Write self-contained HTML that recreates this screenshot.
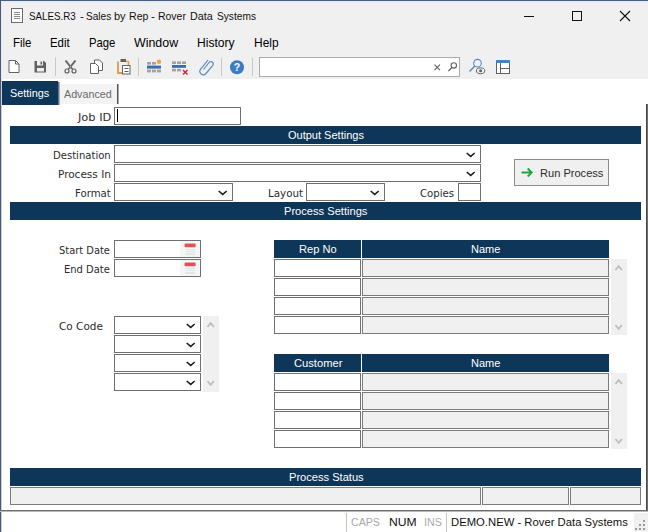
<!DOCTYPE html>
<html><head><meta charset="utf-8"><title>SALES.R3 - Sales by Rep - Rover Data Systems</title>
<style>
*{box-sizing:border-box;margin:0;padding:0}
html,body{width:648px;height:532px;overflow:hidden;background:#fff}
body{position:relative;font-family:"Liberation Sans","DejaVu Sans",sans-serif;font-size:12px;color:#1a1a1a}
.a{position:absolute}
.t{position:absolute;white-space:nowrap;line-height:normal;transform-origin:0 0}
.l{font-family:"DejaVu Sans Condensed","DejaVu Sans","Liberation Sans",sans-serif;font-stretch:condensed}
.in{position:absolute;background:#fff;border:1px solid #707070}
.ro{position:absolute;background:#f0f0f0;border:1px solid #7c7c7c}
</style></head><body>
<!-- window chrome -->
<div class="a" style="left:0;top:0;width:648px;height:79px;background:#f0f0f0"></div>
<div class="a" style="left:0;top:1px;width:648px;height:1px;background:#dfe8f4"></div>
<div class="a" style="left:0;top:2px;width:648px;height:1px;background:#e9eef5"></div>
<div class="a" style="left:1px;top:1px;width:1px;height:78px;background:#e2eaf5"></div>
<div class="a" style="left:0;top:0;width:648px;height:1px;background:#4c5f7e"></div>
<div class="a" style="left:0;top:0;width:1px;height:532px;background:#495a78"></div>
<div class="a" style="left:1px;top:79px;width:1px;height:453px;background:#cdd1d8"></div>
<!-- right edge -->
<div class="a" style="left:646px;top:104px;width:1px;height:406px;background:#4a4a4a"></div>
<div class="a" style="left:647px;top:104px;width:1px;height:406px;background:#6e6e6e"></div>
<!-- title icon -->
<svg class="a" style="left:10px;top:7px" width="15" height="17" viewBox="0 0 15 17"><rect x="1.500" y="1.500" width="11" height="14" fill="#fff" stroke="#6a6a6a"/><path d="M4 5.500h6M4 7.500h6M4 9.500h6M4 11.500h6" stroke="#8a8a8a" stroke-width="1"/></svg>
<!-- window buttons -->
<svg class="a" style="left:520px;top:6px" width="120" height="22" viewBox="0 0 120 22"><path d="M4 10.500h10" stroke="#111" stroke-width="1"/><rect x="52.500" y="5.500" width="9" height="9" fill="none" stroke="#111"/><path d="M100 5l10 10M110 5l-10 10" stroke="#111" stroke-width="1.100"/></svg>
<!-- toolbar -->
<svg class="a" style="left:0;top:56px" width="648" height="24" viewBox="0 0 648 24">
 <path d="M9 4.500h6.500l3.500 3.500v8.500h-10z" fill="#fff" stroke="#626262"/><path d="M15.500 4.500v3.500h3.500" fill="none" stroke="#626262"/>
 <path d="M34.500 5h9.500l2 2v9.500h-11.500z" fill="#626262"/><rect x="37" y="5" width="6" height="4.500" fill="#f0f0f0"/><rect x="40.500" y="5.500" width="1.500" height="3" fill="#626262"/><rect x="37" y="12" width="7" height="3.500" fill="#f0f0f0"/>
 <line x1="55.500" y1="1.500" x2="55.500" y2="20" stroke="#c8c8c8"/>
 <path d="M65 5l1.500 -0.500l6.500 8.500h-1.500zM76 5l-1.500 -0.500l-6.500 8.500h1.500z" fill="#626262" stroke="#626262" stroke-width="0.600"/><circle cx="67" cy="15" r="2" fill="none" stroke="#626262" stroke-width="1.200"/><circle cx="74" cy="15" r="2" fill="none" stroke="#626262" stroke-width="1.200"/>
 <path d="M94.500 4h5l3 3v7.500h-8z" fill="#fff" stroke="#626262"/><path d="M90.500 7.500h5l3 3v7h-8z" fill="#fff" stroke="#626262"/>
 <path d="M118 5.500v11.500h4" fill="none" stroke="#e39a4a" stroke-width="1.800"/><path d="M126 5.500h2.500v3.500" fill="none" stroke="#e39a4a" stroke-width="1.500"/><rect x="120.500" y="3" width="5.500" height="3" fill="#626262"/><rect x="122.500" y="9.500" width="7.500" height="8.500" fill="#fff" stroke="#626262"/><path d="M124.500 12.500h4M124.500 15.500h4" stroke="#626262"/>
 <line x1="138.500" y1="2" x2="138.500" y2="20" stroke="#c8c8c8"/>
 <!-- insert row -->
 <g fill="#a2a2a2"><rect x="147" y="6" width="4" height="2.600"/><rect x="152" y="6" width="4" height="2.600"/><rect x="147" y="13.600" width="4" height="2.800"/><rect x="152" y="13.600" width="4" height="2.800"/><rect x="157" y="13.600" width="4" height="2.800"/></g>
 <rect x="147" y="9.600" width="14" height="3" fill="#3b6ea8"/><circle cx="159" cy="5.800" r="2.200" fill="#f0a24a"/>
 <!-- delete row -->
 <g fill="#a2a2a2"><rect x="172" y="5.400" width="4" height="2.600"/><rect x="177" y="5.400" width="4" height="2.600"/><rect x="182" y="5.400" width="4" height="2.600"/><rect x="172" y="12.800" width="4" height="2.600"/><rect x="177" y="12.800" width="4" height="2.600"/></g>
 <rect x="172" y="9" width="14" height="2.800" fill="#3b6ea8"/><path d="M183 14l4.500 4.500M187.500 14l-4.500 4.500" stroke="#d8202a" stroke-width="1.500"/>
 <!-- clip -->
 <path d="M203.500 13.500l5.500-7a2.300 2.300 0 0 1 3.700 2.800l-6.700 8.200a3.400 3.400 0 0 1-5.300-4.300l7.300-9.200" fill="none" stroke="#5a8bc8" stroke-width="1.200"/>
 <line x1="221.500" y1="2" x2="221.500" y2="20" stroke="#c8c8c8"/>
 <circle cx="237" cy="11.300" r="7" fill="#3d7bc3"/><text x="237" y="15" font-size="10.500" font-weight="bold" fill="#fff" text-anchor="middle" font-family="Liberation Sans, sans-serif">?</text>
 <line x1="252.500" y1="2" x2="252.500" y2="20" stroke="#c8c8c8"/>
 <rect x="259.500" y="1.500" width="200" height="19" fill="#fff" stroke="#ababab"/>
 <path d="M434.500 8.700l5.500 5.500M440 8.700l-5.500 5.500" stroke="#626262" stroke-width="1.100"/>
 <circle cx="453.800" cy="9.400" r="2.700" fill="none" stroke="#626262" stroke-width="1.100"/><path d="M451.900 11.500l-3.600 3.600" stroke="#626262" stroke-width="1.300"/>
 <circle cx="477.500" cy="7.200" r="3.800" fill="none" stroke="#4f8ad0" stroke-width="1.100"/><path d="M474.800 10.100l-5.300 5.300" stroke="#4f8ad0" stroke-width="1.400"/><ellipse cx="480.600" cy="14.800" rx="4.200" ry="2.900" fill="#f0f0f0" stroke="#626262"/><circle cx="480.600" cy="14.800" r="1.500" fill="#626262"/>
 <rect x="496.500" y="5.500" width="13" height="12" fill="#fff" stroke="#626262"/><rect x="496" y="4" width="14" height="3" fill="#4a80c4"/><path d="M500.500 7v10M501 12.500h8" stroke="#626262"/>
</svg>

<!-- tabs -->
<div class="a" style="left:2px;top:81px;width:56px;height:24px;background:#0e3658"></div>
<div class="a" style="left:58px;top:82px;width:1px;height:23px;background:#62748a"></div>
<div class="a" style="left:59px;top:82px;width:1px;height:23px;background:#a9b4c0"></div>
<div class="a" style="left:60px;top:84px;width:57px;height:20px;background:#f3f3f3"></div>
<div class="a" style="left:117px;top:84px;width:1px;height:20px;background:#555"></div>
<div class="a" style="left:118px;top:84px;width:1px;height:20px;background:#a8a8a8"></div>
<div class="in" style="left:114px;top:107px;width:127px;height:18px;"></div>
<div class="a" style="left:117px;top:109px;width:1px;height:13px;background:#000"></div>
<div class="a" style="left:10px;top:126px;width:631px;height:18px;background:#0e3658"></div>
<div class="a" style="left:10px;top:202px;width:631px;height:18px;background:#0e3658"></div>
<div class="a" style="left:10px;top:468px;width:631px;height:18px;background:#0e3658"></div>
<div class="in" style="left:114px;top:145px;width:367px;height:18px;"></div>
<svg class="a" style="left:465px;top:151px" width="11" height="8" viewBox="0 0 11 8"><path d="M1.700 2L5.700 5.400L9.700 2" fill="none" stroke="#1a1a1a" stroke-width="1.5"/></svg>
<div class="in" style="left:114px;top:164px;width:367px;height:18px;"></div>
<svg class="a" style="left:465px;top:170px" width="11" height="8" viewBox="0 0 11 8"><path d="M1.700 2L5.700 5.400L9.700 2" fill="none" stroke="#1a1a1a" stroke-width="1.5"/></svg>
<div class="in" style="left:114px;top:183px;width:119px;height:18px;"></div>
<svg class="a" style="left:217px;top:189px" width="11" height="8" viewBox="0 0 11 8"><path d="M1.700 2L5.700 5.400L9.700 2" fill="none" stroke="#1a1a1a" stroke-width="1.5"/></svg>
<div class="in" style="left:306px;top:183px;width:79px;height:18px;"></div>
<svg class="a" style="left:369px;top:189px" width="11" height="8" viewBox="0 0 11 8"><path d="M1.700 2L5.700 5.400L9.700 2" fill="none" stroke="#1a1a1a" stroke-width="1.5"/></svg>
<div class="in" style="left:458px;top:183px;width:23px;height:18px;"></div>
<div class="a" style="left:514px;top:159px;width:95px;height:27px;background:#f0f0f0;border:1px solid #8c8c8c"></div>
<svg class="a" style="left:520px;top:166px" width="14" height="13" viewBox="0 0 14 13"><path d="M1.500 6.500h10M7.700 2.500l4 4l-4 4" fill="none" stroke="#1fa53c" stroke-width="1.900"/></svg>
<div class="in" style="left:114px;top:240px;width:87px;height:18px;"></div>
<svg class="a" style="left:180px;top:241px" width="20" height="16" viewBox="0 0 20 16"><rect x="0" y="0" width="20" height="16" fill="#f5f5f5"/><rect x="4.500" y="2.500" width="11.200" height="3.700" rx="1.200" fill="#e25252"/><path d="M5.500 8.500h9.500M5.500 10.500h9.500" stroke="#dde6e6"/><path d="M5.500 13h9.500" stroke="#d4d4d4"/></svg>
<div class="in" style="left:114px;top:259px;width:87px;height:18px;"></div>
<svg class="a" style="left:180px;top:260px" width="20" height="16" viewBox="0 0 20 16"><rect x="0" y="0" width="20" height="16" fill="#f5f5f5"/><rect x="4.500" y="2.500" width="11.200" height="3.700" rx="1.200" fill="#e25252"/><path d="M5.500 8.500h9.500M5.500 10.500h9.500" stroke="#dde6e6"/><path d="M5.500 13h9.500" stroke="#d4d4d4"/></svg>
<div class="in" style="left:114px;top:316px;width:87px;height:18px;"></div>
<svg class="a" style="left:185px;top:322px" width="11" height="8" viewBox="0 0 11 8"><path d="M1.700 2L5.700 5.400L9.700 2" fill="none" stroke="#1a1a1a" stroke-width="1.5"/></svg>
<div class="in" style="left:114px;top:335px;width:87px;height:18px;"></div>
<svg class="a" style="left:185px;top:341px" width="11" height="8" viewBox="0 0 11 8"><path d="M1.700 2L5.700 5.400L9.700 2" fill="none" stroke="#1a1a1a" stroke-width="1.5"/></svg>
<div class="in" style="left:114px;top:354px;width:87px;height:18px;"></div>
<svg class="a" style="left:185px;top:360px" width="11" height="8" viewBox="0 0 11 8"><path d="M1.700 2L5.700 5.400L9.700 2" fill="none" stroke="#1a1a1a" stroke-width="1.5"/></svg>
<div class="in" style="left:114px;top:373px;width:87px;height:18px;"></div>
<svg class="a" style="left:185px;top:379px" width="11" height="8" viewBox="0 0 11 8"><path d="M1.700 2L5.700 5.400L9.700 2" fill="none" stroke="#1a1a1a" stroke-width="1.5"/></svg>
<div class="a" style="left:203px;top:316px;width:16px;height:76px;background:#f0f0f0"></div>
<svg class="a" style="left:206px;top:321px" width="11" height="8" viewBox="0 0 11 8"><path d="M1.400 6L4.700 2.200L8 6" fill="none" stroke="#bdbdbd" stroke-width="1.8"/></svg>
<svg class="a" style="left:206px;top:379px" width="11" height="8" viewBox="0 0 11 8"><path d="M1.400 2L4.700 5.800L8 2" fill="none" stroke="#bdbdbd" stroke-width="1.8"/></svg>
<div class="a" style="left:274px;top:240px;width:87px;height:18px;background:#0e3658"></div>
<div class="a" style="left:362px;top:240px;width:247px;height:18px;background:#0e3658"></div>
<div class="in" style="left:274px;top:259px;width:87px;height:18px;"></div>
<div class="ro" style="left:362px;top:259px;width:247px;height:18px;"></div>
<div class="in" style="left:274px;top:278px;width:87px;height:18px;"></div>
<div class="ro" style="left:362px;top:278px;width:247px;height:18px;"></div>
<div class="in" style="left:274px;top:297px;width:87px;height:18px;"></div>
<div class="ro" style="left:362px;top:297px;width:247px;height:18px;"></div>
<div class="in" style="left:274px;top:316px;width:87px;height:18px;"></div>
<div class="ro" style="left:362px;top:316px;width:247px;height:18px;"></div>
<div class="a" style="left:611px;top:259px;width:16px;height:76px;background:#f0f0f0"></div>
<svg class="a" style="left:614px;top:264px" width="11" height="8" viewBox="0 0 11 8"><path d="M1.400 6L4.700 2.200L8 6" fill="none" stroke="#bdbdbd" stroke-width="1.8"/></svg>
<svg class="a" style="left:614px;top:323px" width="11" height="8" viewBox="0 0 11 8"><path d="M1.400 2L4.700 5.800L8 2" fill="none" stroke="#bdbdbd" stroke-width="1.8"/></svg>
<div class="a" style="left:274px;top:354px;width:87px;height:18px;background:#0e3658"></div>
<div class="a" style="left:362px;top:354px;width:247px;height:18px;background:#0e3658"></div>
<div class="in" style="left:274px;top:373px;width:87px;height:18px;"></div>
<div class="ro" style="left:362px;top:373px;width:247px;height:18px;"></div>
<div class="in" style="left:274px;top:392px;width:87px;height:18px;"></div>
<div class="ro" style="left:362px;top:392px;width:247px;height:18px;"></div>
<div class="in" style="left:274px;top:411px;width:87px;height:18px;"></div>
<div class="ro" style="left:362px;top:411px;width:247px;height:18px;"></div>
<div class="in" style="left:274px;top:430px;width:87px;height:18px;"></div>
<div class="ro" style="left:362px;top:430px;width:247px;height:18px;"></div>
<div class="a" style="left:611px;top:373px;width:16px;height:76px;background:#f0f0f0"></div>
<svg class="a" style="left:614px;top:378px" width="11" height="8" viewBox="0 0 11 8"><path d="M1.400 6L4.700 2.200L8 6" fill="none" stroke="#bdbdbd" stroke-width="1.8"/></svg>
<svg class="a" style="left:614px;top:437px" width="11" height="8" viewBox="0 0 11 8"><path d="M1.400 2L4.700 5.800L8 2" fill="none" stroke="#bdbdbd" stroke-width="1.8"/></svg>
<div class="ro" style="left:10px;top:487px;width:471px;height:18px;"></div>
<div class="ro" style="left:482px;top:487px;width:87px;height:18px;"></div>
<div class="ro" style="left:570px;top:487px;width:71px;height:18px;"></div>
<div class="title"><span class="t" style="left:29.15px;top:9.90px;font-size:11.5px;color:#111;transform:scaleX(0.8493)">SALES.R3</span> <span class="t" style="left:79.65px;top:9.90px;font-size:11.5px;color:#111;transform:scaleX(1.0146)">-</span> <span class="t" style="left:85.95px;top:9.90px;font-size:11.5px;color:#111;transform:scaleX(0.8790)">Sales</span> <span class="t" style="left:113.75px;top:9.90px;font-size:11.5px;color:#111;transform:scaleX(0.9542)">by</span> <span class="t" style="left:128.55px;top:9.90px;font-size:11.5px;color:#111;transform:scaleX(0.9190)">Rep</span> <span class="t" style="left:151.25px;top:9.90px;font-size:11.5px;color:#111;transform:scaleX(1.0146)">-</span> <span class="t" style="left:158.15px;top:9.90px;font-size:11.5px;color:#111;transform:scaleX(0.9092)">Rover</span> <span class="t" style="left:190.05px;top:9.90px;font-size:11.5px;color:#111;transform:scaleX(0.9302)">Data</span> <span class="t" style="left:217.15px;top:9.90px;font-size:11.5px;color:#111;transform:scaleX(0.8845)">Systems</span></div>
<div class="t" style="left:13.00px;top:35.70px;font-size:12.2px;color:#000;transform:scaleX(0.9368)">File</div>
<div class="t" style="left:50.00px;top:35.70px;font-size:12.2px;color:#000;transform:scaleX(0.9350)">Edit</div>
<div class="t" style="left:88.75px;top:35.70px;font-size:12.2px;color:#000;transform:scaleX(0.9273)">Page</div>
<div class="t" style="left:133.75px;top:35.70px;font-size:12.2px;color:#000;transform:scaleX(1.0182)">Window</div>
<div class="t" style="left:197.00px;top:35.70px;font-size:12.2px;color:#000;transform:scaleX(0.9928)">History</div>
<div class="t" style="left:253.75px;top:35.70px;font-size:12.2px;color:#000;transform:scaleX(0.9829)">Help</div>
<div class="t" style="left:10.25px;top:85.60px;font-size:11.6px;color:#fff;transform:scaleX(0.9354)">Settings</div>
<div class="t" style="left:63.55px;top:87.40px;font-size:11.6px;color:#6a6a6a;transform:scaleX(0.9248)">Advanced</div>
<div class="t l" style="left:77.50px;top:110.70px;font-size:11px;color:#2c2c2c;transform:scaleX(1.1542)">Job ID</div>
<div class="t l" style="left:52.95px;top:148.90px;font-size:11px;color:#2c2c2c;transform:scaleX(1.0159)">Destination</div>
<div class="t l" style="left:57.75px;top:167.90px;font-size:11px;color:#2c2c2c;transform:scaleX(1.0616)">Process In</div>
<div class="t l" style="left:74.95px;top:186.80px;font-size:11px;color:#2c2c2c;transform:scaleX(1.0284)">Format</div>
<div class="t l" style="left:267.50px;top:186.80px;font-size:11px;color:#2c2c2c;transform:scaleX(1.0449)">Layout</div>
<div class="t l" style="left:420.00px;top:186.80px;font-size:11px;color:#2c2c2c;transform:scaleX(1.0271)">Copies</div>
<div class="t l" style="left:58.75px;top:243.90px;font-size:11px;color:#2c2c2c;transform:scaleX(0.9987)">Start Date</div>
<div class="t l" style="left:63.75px;top:262.90px;font-size:11px;color:#2c2c2c;transform:scaleX(1.0064)">End Date</div>
<div class="t l" style="left:58.75px;top:319.90px;font-size:11px;color:#2c2c2c;transform:scaleX(1.0590)">Co Code</div>
<div class="t" style="left:287.50px;top:128.60px;font-size:11px;color:#fff;transform:scaleX(1.0009)">Output Settings</div>
<div class="t" style="left:283.75px;top:204.60px;font-size:11px;color:#fff;transform:scaleX(1.0103)">Process Settings</div>
<div class="t" style="left:288.75px;top:470.60px;font-size:11px;color:#fff;transform:scaleX(1.0090)">Process Status</div>
<div class="t" style="left:298.75px;top:242.60px;font-size:11px;color:#fff;transform:scaleX(1.0095)">Rep No</div>
<div class="t" style="left:470.75px;top:242.60px;font-size:11px;color:#fff;transform:scaleX(1.0019)">Name</div>
<div class="t" style="left:293.50px;top:356.60px;font-size:11px;color:#fff;transform:scaleX(1.0149)">Customer</div>
<div class="t" style="left:470.75px;top:356.60px;font-size:11px;color:#fff;transform:scaleX(1.0019)">Name</div>
<div class="t" style="left:539.75px;top:166.60px;font-size:11px;color:#2c2c2c;transform:scaleX(1.0066)">Run Process</div>
<div class="t" style="left:350.75px;top:514.60px;font-size:11.6px;color:#a8a8a8;transform:scaleX(0.9152)">CAPS</div>
<div class="t" style="left:389.00px;top:514.60px;font-size:11.6px;color:#111;transform:scaleX(1.0471)">NUM</div>
<div class="t" style="left:423.75px;top:514.60px;font-size:11.6px;color:#a8a8a8;transform:scaleX(0.9261)">INS</div>
<div class="t" style="left:451.25px;top:514.60px;font-size:11.6px;color:#111;transform:scaleX(0.9737)">DEMO.NEW - Rover Data Systems</div>
<!-- status bar -->
<div class="a" style="left:0;top:510px;width:648px;height:1px;background:#6e6e6e"></div>
<div class="a" style="left:0;top:511px;width:648px;height:1px;background:#b8b8b8"></div>
<div class="a" style="left:346px;top:513px;width:1px;height:19px;background:#c4c4c4"></div>
<div class="a" style="left:446px;top:513px;width:1px;height:19px;background:#c4c4c4"></div>
<div class="a" style="left:634px;top:513px;width:14px;height:19px;background:#f0f0f0"></div>
<svg class="a" style="left:635px;top:518px" width="12" height="12" viewBox="0 0 12 12"><g fill="#9a9a9a"><rect x="8" y="2" width="2" height="2"/><rect x="8" y="6" width="2" height="2"/><rect x="4" y="6" width="2" height="2"/><rect x="8" y="10" width="2" height="2"/><rect x="4" y="10" width="2" height="2"/><rect x="0" y="10" width="2" height="2"/></g></svg>
</body></html>
